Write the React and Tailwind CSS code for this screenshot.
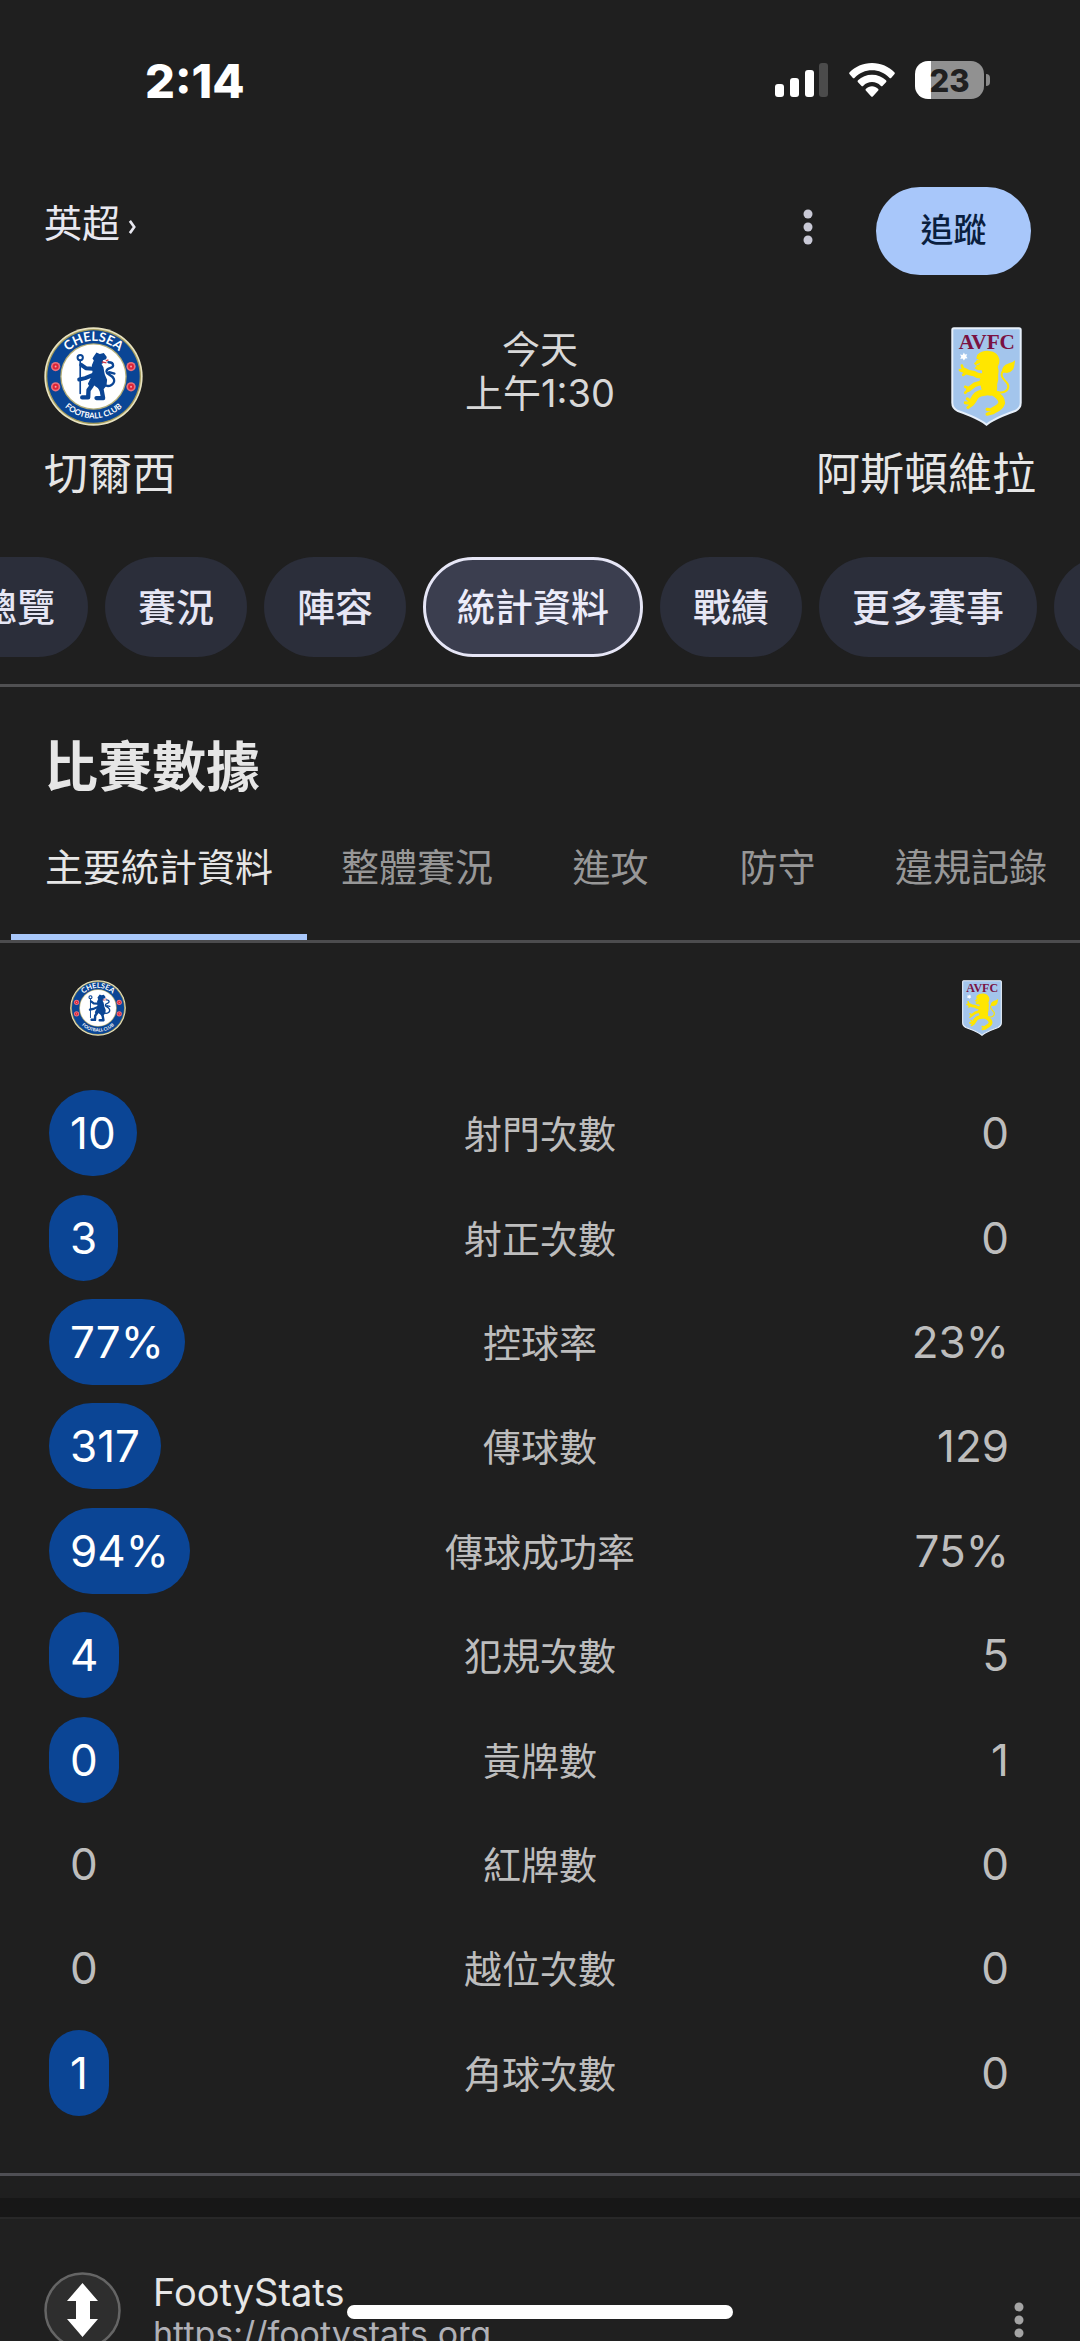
import React from "react";

const chips = ["總覽", "賽況", "陣容", "統計資料", "戰績", "更多賽事", "新聞"];
const tabs = ["主要統計資料", "整體賽況", "進攻", "防守", "違規記錄"];
const stats = [
  ["射門次數", "10", "0", true],
  ["射正次數", "3", "0", true],
  ["控球率", "77%", "23%", true],
  ["傳球數", "317", "129", true],
  ["傳球成功率", "94%", "75%", true],
  ["犯規次數", "4", "5", true],
  ["黃牌數", "0", "1", true],
  ["紅牌數", "0", "0", false],
  ["越位次數", "0", "0", false],
  ["角球次數", "1", "0", true],
];

function ChelseaCrest({ className, id }) {
  return (
    <svg viewBox="42 50 298 298" className={className} role="img" aria-label="切爾西">
      <defs>
        <path id={`${id}-top`} d="M84 199a107 107 0 0 1 214 0" />
        <path id={`${id}-bottom`} d="M65 199a126 126 0 0 0 252 0" />
      </defs>
      <circle cx="191" cy="199" r="148" fill="#e9e3c0" />
      <circle cx="191" cy="199" r="143" fill="#a39b5c" />
      <circle cx="191" cy="199" r="139" fill="#0a4595" />
      <circle cx="191" cy="199" r="100" fill="#b5ae77" />
      <circle cx="191" cy="199" r="96" fill="#ffffff" />
      <g fill="#ffffff" fontFamily="Lato, sans-serif" textAnchor="middle">
        <text fontSize="39" fontWeight="700">
          <textPath href={`#${id}-top`} startOffset="50%">CHELSEA</textPath>
        </text>
        <text fontSize="24" fontWeight="700">
          <textPath href={`#${id}-bottom`} startOffset="50%">FOOTBALL CLUB</textPath>
        </text>
      </g>
      {[[77, 169], [77, 230], [304, 169], [304, 230]].map(([x, y]) => (
        <g key={`${x}-${y}`}>
          <circle cx={x} cy={y} r="14" fill="#e8707c" />
          <circle cx={x} cy={y} r="9" fill="#dd2438" />
          <circle cx={x} cy={y} r="3" fill="#f1a5a8" />
        </g>
      ))}
      <g fill="none" stroke="#0a4595" strokeLinecap="round" strokeLinejoin="round">
        <circle cx="151" cy="142" r="8" strokeWidth="6" />
        <path d="M151 151V250" strokeWidth="5" />
        <path d="M220 222c18 14 38-2 32-16-6-14-22-12-22-22 0-12 20-8 20-18 0-8-6-10-14-10M238 186l16 4" strokeWidth="7" />
        <path d="M190 176l-22-2-14-10M190 194l-24 10-18 4" strokeWidth="12" />
        <path d="M186 226l-10 14-1 22h-18" strokeWidth="13" />
        <path d="M206 222l10 20 4 22h-20" strokeWidth="13" />
      </g>
      <path
        fill="#0a4595"
        d="M192 138l8-11 10 4 12-3 9 12-2 7-10 3 2 8-6 3 6 10 2 12 2 10 7 16-2 18-10 12-14-4-14-10-12 6-6-10 8-16 6-20-2-20 6-14-4-6z"
      />
      <path d="M216 155l14 3M228 152l8-3" stroke="#dd3a45" strokeWidth="4" />
    </svg>
  );
}

function VillaCrest({ className }) {
  return (
    <svg viewBox="64 50 212 298" className={className} role="img" aria-label="阿斯頓維拉">
      <path
        d="M72 54h196q5 0 5 5v219q0 17-17 25-40 14-66 28-12 6-20 13-8-7-20-13-26-14-66-28-17-8-17-25V59q0-5 5-5z"
        fill="#a3c5ec"
        stroke="#e6effa"
        strokeWidth="6"
      />
      <text x="171" y="115" textAnchor="middle" fill="#7a1142" fontSize="64" fontWeight="700" fontFamily="Liberation Serif, serif">
        AVFC
      </text>
      <path d="M102 127l3 6 7-1-3 6 4 6-7 1-4 6-4-6-7 1 3-7-4-6 8 1z" fill="#ffffff" />
      <path
        fill="#ffe600"
        d="M142 134q14-14 36-12 26 2 31 26 1 12-5 22 5 14 1 26 2 14-3 26 2 16-4 30-14 8-28 2-16-10-18-30-8-10 2-22 6-10 2-22-14 2-22-6l6-6-8-8 8-8q-2-8 2-18z"
      />
      <g fill="none" stroke="#ffe600" strokeLinecap="round" strokeLinejoin="round">
        <path d="M162 196q-16 4-30-6-16 0-30-10" strokeWidth="16" />
        <path d="M100 180l-4-14M98 182l-8-2M108 188l-8 6" strokeWidth="8" />
        <path d="M160 218q-14 2-26 6l-18 14" strokeWidth="14" />
        <path d="M118 236l-12-6M114 240l-8 8" strokeWidth="8" />
        <path d="M170 246q-26 2-34 14-6 12-10 16" strokeWidth="20" />
        <path d="M126 276l-14-10M124 280l-18-2M126 284l-12 8" strokeWidth="9" />
        <path d="M190 246q26 16 26 32-4 14-24 22" strokeWidth="20" />
        <path d="M192 302l-20-4M190 308l-18 4" strokeWidth="10" />
        <path d="M206 246c20 4 34-8 28-24-8-14-22-18-18-32 2-8 8-12 14-14" strokeWidth="6" />
      </g>
      <path d="M216 186q0-20 20-26 12-2 20-10-2 20-6 28-10 12-22 10-6 0-12-2z" fill="#ffe600" />
      <path d="M134 146l12 3M140 164l10-4" stroke="#a3c5ec" strokeWidth="3" />
    </svg>
  );
}

function StatusBar() {
  return (
    <div className="flex h-[160px] items-center justify-between pl-[145px] pr-[90px] text-white">
      <span className="text-[47px] font-extrabold leading-none">2:14</span>
      <div className="flex items-center gap-5">
        <svg viewBox="0 0 54 34" className="h-[34px] w-[54px]" aria-hidden="true">
          <rect x="0" y="21" width="9" height="13" rx="3" fill="#fff" />
          <rect x="15" y="15" width="9" height="19" rx="3" fill="#fff" />
          <rect x="30" y="7" width="9" height="27" rx="3" fill="#fff" />
          <rect x="44" y="0" width="9" height="34" rx="3" fill="#4b4b4b" />
        </svg>
        <svg viewBox="0 0 138 102" className="h-[34px] w-[46px]" aria-hidden="true">
          <g fill="#fff">
            <path d="M69 0C42 0 18 11 2 28q-3 3 0 6l9 10q3 3 6 0C31 30 49 22 69 22s38 8 52 22q3 3 6 0l9-10q3-3 0-6C120 11 96 0 69 0z" />
            <path d="M69 35c-16 0-31 6-42 17q-3 3 0 6l10 10q3 3 6 0c7-7 16-11 26-11s19 4 26 11q3 3 6 0l10-10q3-3 0-6C100 41 85 35 69 35z" />
            <path d="M69 70c-7 0-13 3-18 7q-3 3 0 6l15 17q3 3 6 0l15-17q3-3 0-6c-5-4-11-7-18-7z" />
          </g>
        </svg>
        <div className="flex items-center gap-[2px]">
          <div className="flex h-[38px] w-[69px] items-center justify-center rounded-[13px] bg-linear-to-r from-white from-23% to-[#919191] to-23% text-[31px] font-extrabold leading-none text-[#202020]">
            23
          </div>
          <div className="h-[12px] w-[4px] rounded-r-full bg-[#8a8a8a]" />
        </div>
      </div>
    </div>
  );
}

function MoreDots({ className }) {
  return (
    <svg viewBox="0 0 10 36" className={className} fill="currentColor" aria-hidden="true">
      <circle cx="5" cy="5" r="4.5" />
      <circle cx="5" cy="18" r="4.5" />
      <circle cx="5" cy="31" r="4.5" />
    </svg>
  );
}

function MatchHeader() {
  return (
    <header>
      <div className="flex items-center pl-[44px] pr-[49px] pt-[27px]">
        <a href="#league" className="flex items-center gap-2 pb-[16px] text-[38px] leading-[44px] text-[#e8e8f0]">
          英超
          <svg viewBox="0 0 10 16" className="mt-2 h-[14px] w-[9px]" fill="none" stroke="currentColor" strokeWidth="3" aria-hidden="true">
            <path d="M2 1l5 7-5 7" />
          </svg>
        </a>
        <button type="button" aria-label="更多選項" className="ml-auto mr-[63px] pb-2 text-[#c9c9d6]">
          <MoreDots className="h-9 w-[10px]" />
        </button>
        <button type="button" className="h-[88px] w-[155px] rounded-full bg-[#a8c7fa] text-[33px] font-medium text-[#0a1f3f]">
          追蹤
        </button>
      </div>
      <div className="flex items-start justify-between px-[44px] pt-[52px]">
        <div className="flex flex-1 flex-col items-start gap-[22px]">
          <ChelseaCrest id="main" className="h-[99px] w-[99px]" />
          <span className="whitespace-nowrap text-[44px] leading-[52px] text-[#e6e6e6]">切爾西</span>
        </div>
        <p className="text-center text-[38px] leading-[44px] text-[#d8d8d8]">
          今天
          <br />
          上午1:30
        </p>
        <div className="flex flex-1 flex-col items-end gap-[22px]">
          <VillaCrest className="mr-[14px] h-[99px] w-[71px]" />
          <span className="whitespace-nowrap text-[44px] leading-[52px] text-[#e6e6e6]">阿斯頓維拉</span>
        </div>
      </div>
      <nav className="mt-[57px] overflow-hidden border-b-[3px] border-[#505052] pb-[27px]">
        <div className="-ml-[54px] flex gap-[17px]">
          {chips.map((c, i) => (
            <button
              key={c}
              type="button"
              aria-pressed={i === 3}
              className={
                i === 3
                  ? "h-[100px] shrink-0 whitespace-nowrap rounded-full border-3 border-[#e6e6f6] bg-[#3b3e4f] px-[31px] text-[38px] font-medium text-[#ececfa]"
                  : "h-[100px] shrink-0 whitespace-nowrap rounded-full bg-[#2b2e3a] px-[33px] text-[38px] font-medium text-[#e6e6f4]"
              }
            >
              {c}
            </button>
          ))}
        </div>
      </nav>
    </header>
  );
}

function StatsPanel() {
  return (
    <section>
      <h2 className="px-[44px] pt-[48px] text-[54px] font-semibold leading-[66px] text-[#e6e6e6]">比賽數據</h2>
      <div role="tablist" className="flex overflow-hidden border-b-[3px] border-[#4c4c4e] pl-[11px]">
        {tabs.map((t, i) => (
          <button
            key={t}
            type="button"
            role="tab"
            aria-selected={i === 0}
            className={
              i === 0
                ? "h-[139px] shrink-0 border-b-[6px] border-[#a8c7fa] px-[34px] text-[38px] text-[#e6e6e6]"
                : "h-[139px] min-w-[167px] shrink-0 px-[34px] pb-[6px] text-[38px] text-[#979797]"
            }
          >
            {t}
          </button>
        ))}
      </div>
      <div className="flex items-center justify-between pb-[45px] pl-[70px] pr-[78px] pt-[37px]">
        <ChelseaCrest id="small" className="h-[56px] w-[56px]" />
        <VillaCrest className="h-[56px] w-[40px]" />
      </div>
      <table className="h-[1044px] w-full table-fixed text-[#bdbdbd]">
        <tbody>
          {stats.map(([label, home, away, lead]) => (
            <tr key={label}>
              <td className="p-0 pl-[49px]">
                <span
                  className={
                    lead
                      ? "flex h-[86px] w-fit items-center rounded-[43px] bg-[#0b4595] px-[21px] text-[44px] text-white"
                      : "flex h-[86px] w-fit items-center px-[21px] text-[44px]"
                  }
                >
                  {home}
                </span>
              </td>
              <th scope="row" className="px-0 pb-0 pt-[3px] text-center text-[38px] font-normal">
                {label}
              </th>
              <td className="p-0 pr-[71px] text-right text-[44px]">{away}</td>
            </tr>
          ))}
        </tbody>
      </table>
      <div className="mt-[48px] border-t-[3px] border-[#4f4f54]" />
    </section>
  );
}

function ResultFooter() {
  return (
    <article className="mt-[22px] border-t-[19px] border-[#171717]">
      <div className="flex items-start border-t-2 border-[#282828] bg-[#202020] pl-[44px] pr-[56px] pt-[53px]">
        <svg viewBox="0 0 77 77" className="h-[77px] w-[77px]" aria-hidden="true">
          <circle cx="38.5" cy="38.5" r="37" fill="#2e2e2e" stroke="#656565" strokeWidth="2.5" />
          <path d="M38.500 11L54 29H46V47H54L38.500 65L23 47H32V29H23z" fill="#fff" />
        </svg>
        <a href="https://footystats.org" className="ml-[32px] flex flex-col">
          <span className="text-[38px] leading-[40px] text-[#e6e6e6]">FootyStats</span>
          <span className="text-[34px] leading-[44px] text-[#b0b0b6]">https://footystats.org</span>
        </a>
        <button type="button" aria-label="關於此結果" className="ml-auto mt-[30px] text-[#a4a4a4]">
          <MoreDots className="h-9 w-[10px]" />
        </button>
      </div>
    </article>
  );
}

export default function App() {
  return (
    <main
      lang="zh-Hant"
      className="h-screen overflow-hidden bg-[#1f1f1f] font-['Inter','Noto_Sans_CJK_TC',sans-serif]"
    >
      <StatusBar />
      <MatchHeader />
      <StatsPanel />
      <ResultFooter />
      <div className="fixed inset-x-0 bottom-[22px] mx-auto h-[14px] w-[386px] rounded-full bg-white" />
    </main>
  );
}
